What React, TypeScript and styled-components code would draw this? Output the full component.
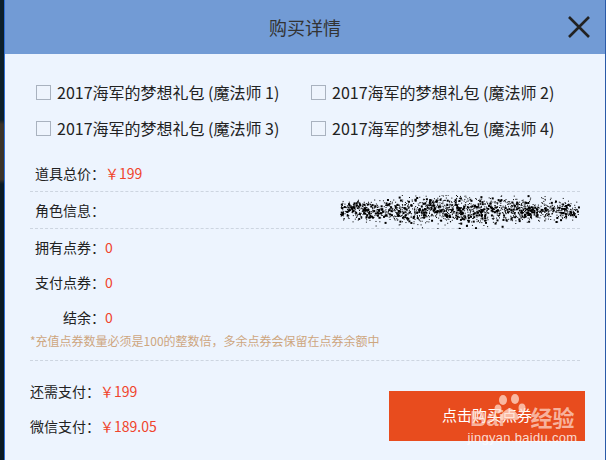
import React from "react";
import styled, { createGlobalStyle } from "styled-components";

const GlobalStyle = createGlobalStyle`
  html, body {
    margin: 0;
    padding: 0;
    background: #0b1a22;
  }
  body {
    font-family: "Noto Sans CJK SC", "Noto Sans", sans-serif;
  }
`;

const packs = [
  "2017海军的梦想礼包 (魔法师 1)",
  "2017海军的梦想礼包 (魔法师 2)",
  "2017海军的梦想礼包 (魔法师 3)",
  "2017海军的梦想礼包 (魔法师 4)",
];

// deterministic scribble used to hide the role name
const scribble = (() => {
  let seed = 7;
  const rnd = () => {
    seed = (seed * 1103515245 + 12345) % 2147483648;
    return seed / 2147483648;
  };
  const dots: { x: number; y: number; s: number }[] = [];
  for (let i = 0; i < 2000; i++) {
    const x = rnd() * 238;
    const edge = Math.sin((x / 238) * Math.PI);
    const spread = 8 + 6 * edge;
    const y = 15 + (rnd() + rnd() + rnd() - 1.5) * spread;
    if (rnd() > 0.35 + 0.6 * edge && rnd() > 0.4) continue;
    dots.push({ x, y, s: rnd() > 0.8 ? 2 : 1 });
  }
  return dots;
})();

const App: React.FC = () => {
  return (
    <Screen>
      <GlobalStyle />
      <Backdrop />
      <Dialog>
        <Header>
          <Title>购买详情</Title>
          <CloseButton aria-label="关闭">
            <svg width="24" height="24" viewBox="0 0 24 24">
              <path d="M2 2 L22 22 M22 2 L2 22" stroke="#222" strokeWidth="2.6" />
            </svg>
          </CloseButton>
        </Header>
        <Body>
          <PackGrid>
            {packs.map((p) => (
              <PackItem key={p}>
                <Box />
                {p}
              </PackItem>
            ))}
          </PackGrid>

          <InfoRow dashed>
            <Label>道具总价：</Label>
            <Price>￥199</Price>
          </InfoRow>
          <InfoRow dashed>
            <Label>角色信息：</Label>
            <Hidden>
              <svg width="240" height="34" viewBox="0 0 240 34">
                {scribble.map((d, i) => (
                  <rect key={i} x={d.x} y={d.y} width={d.s} height={d.s} fill="#000" />
                ))}
              </svg>
            </Hidden>
          </InfoRow>
          <InfoRow>
            <Label>拥有点券：</Label>
            <Price>0</Price>
          </InfoRow>
          <InfoRow>
            <Label>支付点券：</Label>
            <Price>0</Price>
          </InfoRow>
          <InfoRow>
            <Label>结余：</Label>
            <Price>0</Price>
          </InfoRow>
          <Note>*充值点券数量必须是100的整数倍，多余点券会保留在点券余额中</Note>

          <Footer>
            <Totals>
              <TotalRow>
                还需支付：<Price>￥199</Price>
              </TotalRow>
              <TotalRow>
                微信支付：<Price>￥189.05</Price>
              </TotalRow>
            </Totals>
            <BuyButton>点击购买点券</BuyButton>
          </Footer>
        </Body>
        <Watermark>
          <Paw viewBox="0 0 34 30" width="34" height="30">
            <ellipse cx="9" cy="7" rx="4" ry="5" />
            <ellipse cx="21" cy="6" rx="4" ry="5" />
            <ellipse cx="4" cy="16" rx="3.5" ry="4.5" />
            <ellipse cx="28" cy="15" rx="3.5" ry="4.5" />
            <path d="M8 27 C4 27 6 19 16 15 C24 19 28 27 22 27 C18 26 14 26 8 27 Z" />
          </Paw>
          <MarkBrand>
            <span>Bai</span>
            <span>经验</span>
          </MarkBrand>
          <MarkUrl>jingyan.baidu.com</MarkUrl>
        </Watermark>
      </Dialog>
    </Screen>
  );
};

export default App;

const Screen = styled.div`
  display: flex;
  width: 606px;
  height: 460px;
  overflow: hidden;
`;

const Backdrop = styled.div`
  width: 4px;
  flex-shrink: 0;
  background: linear-gradient(
    to bottom,
    #0d1f2a 0%,
    #0d1f2a 26%,
    #3b3228 27%,
    #3b3228 39%,
    #0a1a24 40%,
    #0a1a24 100%
  );
`;

const Dialog = styled.div`
  position: relative;
  flex: 1;
  display: flex;
  flex-direction: column;
  background: #edf4fe;
  border-left: 1px solid #2f6fd6;
  border-right: 1px solid #2a5aa8;
`;

const Header = styled.div`
  position: relative;
  height: 54px;
  flex-shrink: 0;
  display: flex;
  align-items: center;
  justify-content: center;
  background: #729bd5;
`;

const Title = styled.div`
  font-size: 18px;
  color: #333;
  line-height: 1;
`;

const CloseButton = styled.div`
  position: absolute;
  right: 14px;
  top: 15px;
  width: 24px;
  height: 24px;
  line-height: 0;
`;

const Body = styled.div`
  display: flex;
  flex-direction: column;
  padding: 20px 25px 0 25px;
`;

const PackGrid = styled.div`
  display: grid;
  grid-template-columns: 275px 1fr;
  padding-left: 6px;
  margin-bottom: 9px;
`;

const PackItem = styled.label`
  display: flex;
  align-items: center;
  height: 36px;
  gap: 6px;
  font-size: 16px;
  color: #222;
  white-space: nowrap;
`;

const Box = styled.span`
  width: 13px;
  height: 13px;
  border: 1px solid #a9b2bf;
  background: #eef4fd;
  flex-shrink: 0;
`;

const InfoRow = styled.div<{ dashed?: boolean }>`
  display: flex;
  align-items: center;
  height: ${({ dashed }) => (dashed ? "36px" : "35px")};
  padding-left: 5px;
  border-bottom: ${({ dashed }) => (dashed ? "1px dashed #cdd5e0" : "none")};
  font-size: 14px;
  color: #222;
`;

const Label = styled.span`
  width: 70px;
  text-align: right;
  flex-shrink: 0;
`;

const Price = styled.span`
  color: #f0442c;
`;

const Hidden = styled.div`
  margin-left: auto;
  line-height: 0;
  margin-top: 4px;
`;

const Note = styled.div`
  font-size: 12px;
  color: #cda67e;
  line-height: 14px;
  padding-bottom: 12px;
  border-bottom: 1px dashed #cdd5e0;
`;

const Footer = styled.div`
  display: flex;
  align-items: flex-start;
  justify-content: space-between;
  margin-right: -5px;
  padding-top: 12px;
`;

const Totals = styled.div`
  display: flex;
  flex-direction: column;
`;

const TotalRow = styled.div`
  height: 35px;
  display: flex;
  align-items: center;
  font-size: 14px;
  color: #222;
`;

const BuyButton = styled.button`
  width: 196px;
  height: 50px;
  border: none;
  background: #e84c1e;
  color: #fff;
  font-family: inherit;
  font-size: 15px;
  padding: 0 0 4px 0;
  margin-top: 18px;
  cursor: pointer;
`;

const Watermark = styled.div`
  position: absolute;
  left: 460px;
  top: 393px;
  width: 115px;
  display: flex;
  flex-direction: column;
  align-items: center;
  pointer-events: none;
`;

const Paw = styled.svg`
  position: absolute;
  left: 29px;
  top: 0;
  fill: rgba(255, 220, 205, 0.75);
`;

const MarkBrand = styled.div`
  display: flex;
  gap: 26px;
  margin-top: 14px;
  font-family: "Liberation Sans", "Noto Sans CJK SC", sans-serif;
  font-size: 22px;
  font-weight: bold;
  line-height: 24px;
  color: rgba(255, 225, 215, 0.7);
`;

const MarkUrl = styled.div`
  font-family: "Liberation Sans", sans-serif;
  font-size: 13px;
  line-height: 14px;
  color: rgba(255, 255, 255, 0.8);
  letter-spacing: 0.3px;
`;
